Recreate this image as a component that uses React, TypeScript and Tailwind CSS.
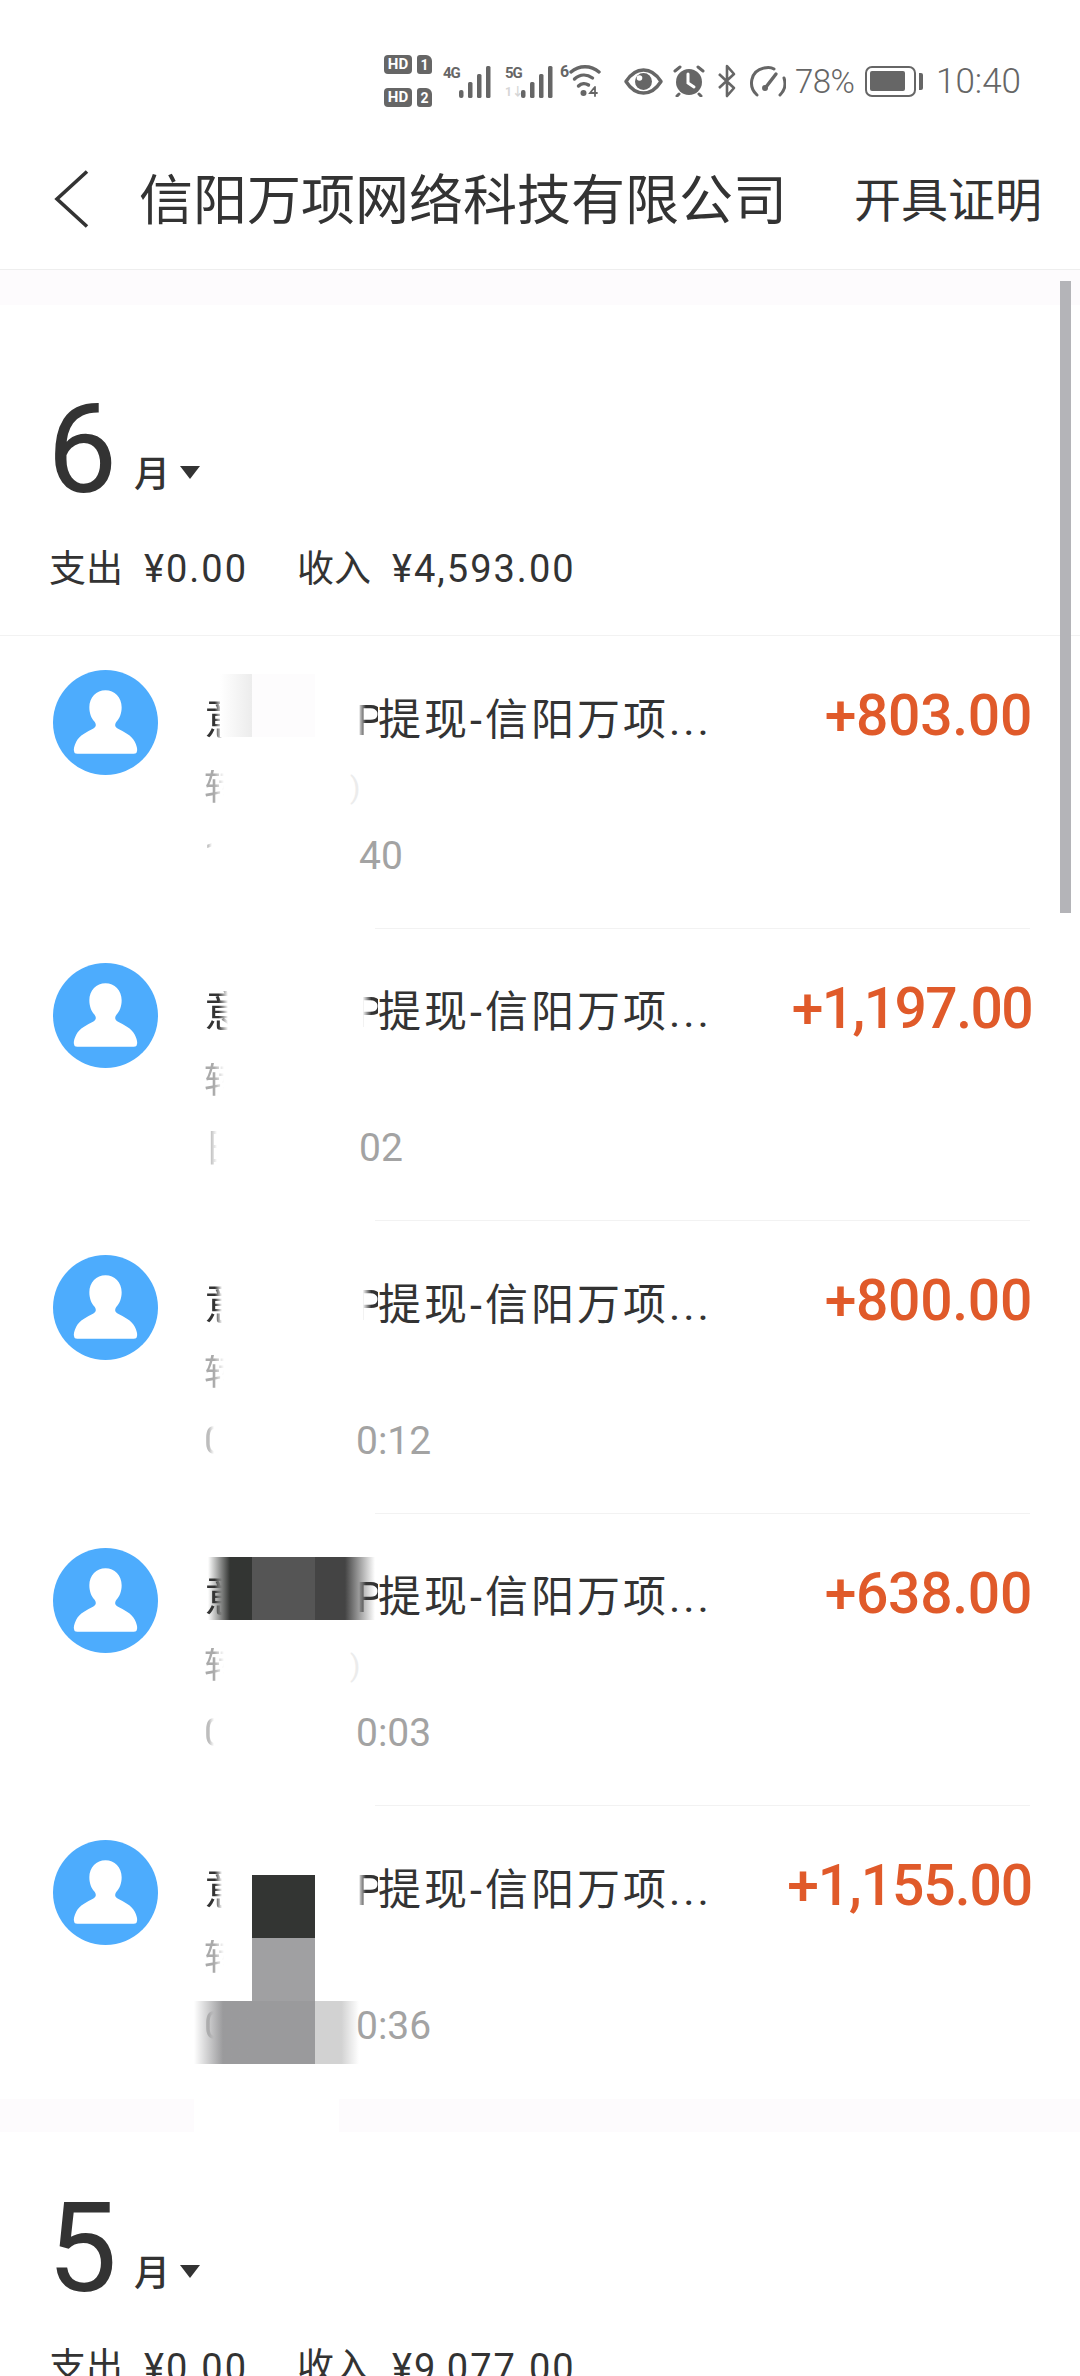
const gray = "#666666";

function Hd({ n }: { n: string }) {
  return (
    <div className="flex items-center gap-[5px]">
      <span className="flex h-[19px] w-[28px] items-center justify-center rounded-[4px] bg-[#666] text-[15px] leading-none font-bold text-white">HD</span>
      <span className="flex h-[19px] w-[15px] items-center justify-center rounded-[3px] rounded-tr-[6px] bg-[#666] text-[14px] leading-none font-bold text-white">{n}</span>
    </div>
  );
}

function Bars() {
  return (
    <svg width="33" height="32" viewBox="0 0 33 32" fill={gray}>
      <rect x="0" y="24" width="4.5" height="8" rx="2" />
      <rect x="9" y="16" width="4.5" height="16" rx="1.5" />
      <rect x="18" y="8" width="4.5" height="24" rx="1.5" />
      <rect x="27" y="0" width="4.5" height="32" rx="1.5" />
    </svg>
  );
}

function Signal({ label, sub }: { label: string; sub?: boolean }) {
  return (
    <div className="flex h-[34px] items-end">
      <div className="flex h-[32px] w-[16px] flex-col justify-between">
        <span className="text-[15px] leading-[14px] font-bold tracking-[-1px] text-[#666]">{label}</span>
        {sub && <span className="text-[12px] leading-[12px] font-bold text-[#d6d6d6]">1↓</span>}
      </div>
      <Bars />
    </div>
  );
}

function Wifi() {
  return (
    <div className="flex h-[34px] items-start">
      <span className="w-[9px] text-[16px] leading-[16px] font-bold text-[#666]">6</span>
      <svg width="33" height="33" viewBox="0 0 33 33" fill="none" stroke={gray} strokeWidth="3.4" strokeLinecap="round">
        <path d="M2 8 C10 1 22 1 30 8" />
        <path d="M5.5 15 C11 10 18 10 23.5 14" />
        <path d="M9.5 22 C12.5 19 16.5 19 19.5 21" />
        <circle cx="14.5" cy="29" r="3" fill={gray} stroke="none" />
        <path d="M25 24 L21 29 H28 M26 23 V32" strokeWidth="1.8" />
      </svg>
    </div>
  );
}

function Eye() {
  return (
    <svg width="39" height="27" viewBox="0 0 39 27" fill="none">
      <path d="M2 13.5 C8 4 14 2 19.5 2 C25 2 31 4 37 13.5 C31 23 25 25 19.5 25 C14 25 8 23 2 13.5 Z" stroke={gray} strokeWidth="3.4" strokeLinejoin="round" />
      <circle cx="19.5" cy="13.5" r="8.5" fill={gray} />
      <circle cx="15.5" cy="10" r="2.8" fill="#fff" />
    </svg>
  );
}

function Alarm() {
  return (
    <svg width="32" height="32" viewBox="0 0 32 32" fill="none">
      <circle cx="16" cy="17" r="13" fill={gray} />
      <path d="M15 9 V18 L21 22" stroke="#fff" strokeWidth="3" strokeLinecap="round" />
      <path d="M2 6 L7 2 M30 6 L25 2 M6 29 L4 31 M26 29 L28 31" stroke={gray} strokeWidth="3" strokeLinecap="round" />
    </svg>
  );
}

function Bluetooth() {
  return (
    <svg width="20" height="34" viewBox="0 0 20 34" fill="none" stroke={gray} strokeWidth="2.6" strokeLinejoin="round">
      <path d="M2 10 L17 24 L10 32 V2 L17 10 L2 24" />
    </svg>
  );
}

function Speed() {
  return (
    <svg width="37" height="33" viewBox="0 0 37 33" fill="none" stroke={gray} strokeWidth="3" strokeLinecap="round">
      <path d="M8 30 C-1 22 1 6 15 3 C19 2 22 2 25 4" />
      <path d="M31 30 C36 25 37 19 35 13" />
      <path d="M17 22 L27 9" strokeWidth="3.4" />
      <circle cx="16" cy="23" r="3" fill={gray} stroke="none" />
    </svg>
  );
}

function Battery() {
  return (
    <div className="flex items-center gap-[3px]">
      <div className="h-[31px] w-[51px] rounded-[7px] border-[2.5px] border-[#666] p-[3.5px]">
        <div className="h-full w-[35px] rounded-[2px] bg-[#666]" />
      </div>
      <div className="h-[17px] w-[4px] rounded-r-[2px] bg-[#666]" />
    </div>
  );
}

function StatusBar() {
  return (
    <div className="flex h-[129px] justify-end pt-[53px] pr-[59px]">
      <div className="flex h-[56px] items-center text-[#666]">
        <div className="flex h-[52px] flex-col justify-between">
          <Hd n="1" />
          <Hd n="2" />
        </div>
        <div className="ml-[11px]"><Signal label="4G" /></div>
        <div className="ml-[13px]"><Signal label="5G" sub /></div>
        <div className="ml-[6px]"><Wifi /></div>
        <div className="ml-[22px]"><Eye /></div>
        <div className="ml-[10px]"><Alarm /></div>
        <div className="ml-[12px]"><Bluetooth /></div>
        <div className="ml-[12px]"><Speed /></div>
        <span className="ml-[9px] w-[62px] text-[33px] leading-none font-light tracking-[-0.5px]">78%</span>
        <div className="ml-[8px]"><Battery /></div>
        <span className="ml-[13px] text-[35px] leading-none font-light">10:40</span>
      </div>
    </div>
  );
}

function NavBar() {
  return (
    <div className="flex h-[141px] items-center border-b border-[#eeeeee] pr-[38px] text-[#333]">
      <svg width="36" height="58" viewBox="0 0 36 58" fill="none" stroke="#333" strokeWidth="3.6" className="ml-[53px] shrink-0">
        <path d="M34 1.5 L4 29 L34 56.5" />
      </svg>
      <span className="ml-[50px] pt-[5px] text-[54px] leading-none">信阳万项网络科技有限公司</span>
      <span className="ml-auto pt-[3px] text-[47px] leading-none">开具证明</span>
    </div>
  );
}

function Caret() {
  return <span className="mb-[14px] ml-[10px] h-0 w-0 border-x-[10.5px] border-t-[13px] border-x-transparent border-t-[#333]" />;
}

function MonthHeader({ month, expense, income, top }: { month: string; expense: string; income: string; top: string }) {
  return (
    <div className="text-[#333]">
      <div className={`flex items-end pl-[47px] ${top}`}>
        <span className="h-[106px] w-[87px] text-[125px] leading-none">{month}</span>
        <span className="text-[36px] leading-[36px] font-medium">月</span>
        <Caret />
      </div>
      <div className="mt-[56px] flex h-[40px] items-center pl-[49px] text-[38px] leading-none">
        <span className="w-[95px] text-[37px]">支出</span>
        <span className="w-[153px] tracking-[2px]">{expense}</span>
        <span className="w-[95px] text-[37px]">收入</span>
        <span className="tracking-[2px]">{income}</span>
      </div>
    </div>
  );
}

type Row = {
  amount: string;
  amountTracking: string;
  topWidth: string;
  pMask: string;
  timeHead: string;
  timeHeadWidth: string;
  timeTail: string;
  timeIndent: string;
  trace?: boolean;
};

const pFull = "[mask-image:linear-gradient(to_right,#0003_15%,black_45%)]";
const pCut = "[mask-image:linear-gradient(to_right,transparent_30%,black_70%)]";

const rows: Row[] = [
  { amount: "+803.00", amountTracking: "tracking-[-0.3px]", topWidth: "w-[18px]", pMask: pFull, timeHead: "1", timeHeadWidth: "w-[8px]", timeTail: "40", timeIndent: "w-[155px]", trace: true },
  { amount: "+1,197.00", amountTracking: "tracking-[-1.6px]", topWidth: "w-[24px]", pMask: pCut, timeHead: "日", timeHeadWidth: "w-[13px]", timeTail: "02", timeIndent: "w-[155px]" },
  { amount: "+800.00", amountTracking: "tracking-[-0.3px]", topWidth: "w-[18px]", pMask: pCut, timeHead: "0", timeHeadWidth: "w-[10px]", timeTail: "0:12", timeIndent: "w-[152px]" },
  { amount: "+638.00", amountTracking: "tracking-[-0.3px]", topWidth: "w-[18px]", pMask: pFull, timeHead: "0", timeHeadWidth: "w-[10px]", timeTail: "0:03", timeIndent: "w-[152px]", trace: true },
  { amount: "+1,155.00", amountTracking: "tracking-[-1.1px]", topWidth: "w-[18px]", pMask: pFull, timeHead: "0", timeHeadWidth: "w-[10px]", timeTail: "0:36", timeIndent: "w-[152px]" },
];

function Avatar() {
  return (
    <svg width="105" height="105" viewBox="0 0 104 104" className="shrink-0">
      <circle cx="52" cy="52" r="52" fill="#4dacfd" />
      <path d="M52 20c-9 0-16 7-16 17c0 6 2 11 5 14c2 3 2 5-1 7c-6 3-14 7-17 13c-2 4-3 8-2 10c0 1 1 2 3 2h56c2 0 3-1 3-2c1-2 0-6-2-10c-3-6-11-10-17-13c-3-2-3-4-1-7c3-3 5-8 5-14c0-10-7-17-16-17z" fill="#fff" />
    </svg>
  );
}

// censor blocks painted over the row text in the source screenshot
function Mosaic({ index }: { index: number }) {
  if (index === 0) {
    return (
      <div className="absolute top-[38px] left-[220px] flex h-[63px]">
        <div className="w-[32px] bg-gradient-to-r from-white to-[#ececec]" />
        <div className="w-[63px] bg-[#fdfcfd]" />
      </div>
    );
  }
  if (index === 3) {
    return (
      <div className="absolute top-[43px] left-[208px] flex h-[63px]">
        <div className="w-[44px] bg-gradient-to-r from-[#33353300] via-[#333533] to-[#333533]" />
        <div className="w-[63px] bg-[#555555]" />
        <div className="w-[60px] bg-gradient-to-r from-[#444444] via-[#444444] to-[#44444400]" />
      </div>
    );
  }
  if (index === 4) {
    return (
      <div className="absolute top-[69px] left-[194px] flex w-[165px] flex-col">
        <div className="ml-[58px] h-[63px] w-[63px] bg-[#333533]" />
        <div className="ml-[58px] h-[63px] w-[63px] bg-[#a0a0a2]" />
        <div className="flex h-[63px]">
          <div className="w-[58px] bg-gradient-to-r from-[#9a9a9c00] to-[#9a9a9c] to-50%" />
          <div className="w-[63px] bg-[#9a9a9c]" />
          <div className="w-[44px] bg-gradient-to-r from-[#d2d2d2] from-60% to-[#d2d2d200]" />
        </div>
      </div>
    );
  }
  return null;
}

function TxRow({ row, index }: { row: Row; index: number }) {
  return (
    <div className="relative h-[292.6px] pr-[48px] pl-[53px]">
      <div className="flex pt-[34px]">
        <Avatar />
        <div className="ml-[46px] flex-1 pt-[24px]">
          <div className="flex h-[52px] items-center text-[43px] leading-none tracking-[3px] text-[#333]">
            <div className="w-[152px] shrink-0">
              <div className={`${row.topWidth} overflow-hidden whitespace-nowrap [mask-image:linear-gradient(to_right,black_60%,transparent)]`}>意</div>
            </div>
            <span className={`w-[22px] shrink-0 overflow-hidden ${row.pMask}`}>P</span>
            <span className="whitespace-nowrap">提现-信阳万项...</span>
          </div>
          <div className="mt-[17px] flex h-[50px] items-center text-[36px] leading-none text-[#aaaaaa]">
            <div className="w-[20px] overflow-hidden whitespace-nowrap [mask-image:linear-gradient(to_right,black_50%,transparent)]">转</div>
            {row.trace && <span className="ml-[126px] text-[30px] text-[#ececec]">)</span>}
          </div>
          <div className="mt-[18px] flex h-[50px] items-center text-[39px] leading-none text-[#a3a3a3]">
            <div className={`${row.timeIndent} shrink-0`}>
              <div className={`${row.timeHeadWidth} overflow-hidden whitespace-nowrap text-[#bdbdbd] [mask-image:linear-gradient(to_right,black_50%,transparent)]`}>{row.timeHead}</div>
            </div>
            <span>{row.timeTail}</span>
          </div>
        </div>
        <span className={`pt-[17px] text-[57px] leading-none font-medium text-[#e05a2a] ${row.amountTracking}`}>{row.amount}</span>
      </div>
      {index < rows.length - 1 && <div className="absolute right-[50px] bottom-0 left-[375px] h-px bg-[#f2f2f2]" />}
      <Mosaic index={index} />
    </div>
  );
}

export default function App() {
  return (
    <div className="relative h-[2376px] w-[1080px] overflow-hidden bg-white [font-family:Roboto,'Noto_Sans_CJK_SC',sans-serif]">
      <StatusBar />
      <NavBar />
      <div className="h-[35px] bg-[#fdfbfd]" />
      <MonthHeader month="6" expense="¥0.00" income="¥4,593.00" top="pt-[82px]" />
      <div className="mt-[46px] h-px bg-[#f2f2f2]" />
      {rows.map((row, i) => (
        <TxRow key={i} row={row} index={i} />
      ))}
      <div className="flex h-[33px]">
        <div className="w-[194px] bg-[#fdfbfd]" />
        <div className="w-[145px]" />
        <div className="flex-1 bg-[#fdfbfd]" />
      </div>
      <MonthHeader month="5" expense="¥0.00" income="¥9,077.00" top="pt-[54px]" />
      <div className="absolute top-[281px] right-[9px] h-[632px] w-[11px] bg-[#b4b4b8]" />
    </div>
  );
}
